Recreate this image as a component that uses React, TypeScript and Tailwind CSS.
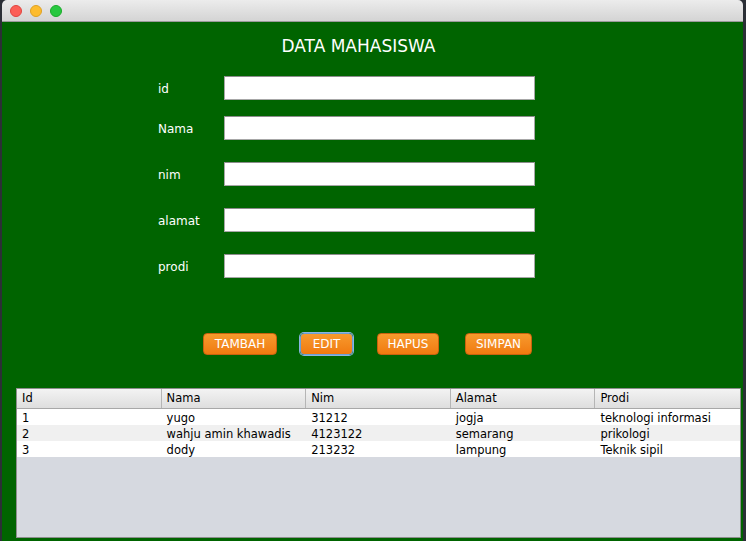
import React from 'react';

const rows = [
  { id: '1', nama: 'yugo', nim: '31212', alamat: 'jogja', prodi: 'teknologi informasi' },
  { id: '2', nama: 'wahju amin khawadis', nim: '4123122', alamat: 'semarang', prodi: 'prikologi' },
  { id: '3', nama: 'dody', nim: '213232', alamat: 'lampung', prodi: 'Teknik sipil' },
];

const fields = [
  { label: 'id', gap: 'mt-0' },
  { label: 'Nama', gap: 'mt-[16px]' },
  { label: 'nim', gap: 'mt-[22px]' },
  { label: 'alamat', gap: 'mt-[22px]' },
  { label: 'prodi', gap: 'mt-[22px]' },
];

const buttons = [
  { label: 'TAMBAH', w: 'w-[74px]', ml: 'ml-0', focus: false },
  { label: 'EDIT', w: 'w-[53px]', ml: 'ml-[23px]', focus: true },
  { label: 'HAPUS', w: 'w-[62px]', ml: 'ml-[24px]', focus: false },
  { label: 'SIMPAN', w: 'w-[67px]', ml: 'ml-[26px]', focus: false },
];

const headers = ['Id', 'Nama', 'Nim', 'Alamat', 'Prodi'];

export default function App() {
  return (
    <div
      className="w-[746px] h-[541px] bg-[#2b2f36] flex overflow-hidden"
      style={{ fontFamily: '"DejaVu Sans", "Liberation Sans", sans-serif' }}
    >
      <div className="ml-[2px] w-[741px] h-full flex flex-col rounded-t-[5px] overflow-hidden">
        {/* title bar */}
        <div className="h-[22px] shrink-0 bg-gradient-to-b from-[#ececec] to-[#d4d4d4] border-b border-[#9a9a9a] flex items-center pl-[8px] gap-[8px]">
          <span className="w-[12px] h-[12px] rounded-full bg-[#fc5f57] border border-[#e0443e]" />
          <span className="w-[12px] h-[12px] rounded-full bg-[#fdbc2e] border border-[#dea123]" />
          <span className="w-[12px] h-[12px] rounded-full bg-[#28c840] border border-[#1aab29]" />
        </div>

        <div className="flex-1 bg-[#006400] flex flex-col">
          <div className="pt-[15px] flex justify-center pr-[28px]">
            <span className="text-white text-[17px] leading-[19px]">DATA MAHASISWA</span>
          </div>

          <div className="mt-[20px] flex flex-col">
            {fields.map((f) => (
              <div key={f.label} className={`flex items-center ${f.gap}`}>
                <span className="w-[222px] pl-[156px] pt-[1px] text-white text-[12px]">{f.label}</span>
                <div className="w-[311px] h-[24px] bg-white border border-[#a7a7a7] border-t-[#8c8c8c]" />
              </div>
            ))}
          </div>

          <div className="mt-[55px] flex pl-[201px]">
            {buttons.map((b) => (
              <div
                key={b.label}
                className={`${b.w} ${b.ml} h-[22px] rounded-[4px] bg-gradient-to-b from-[#f79a2c] to-[#f07a0e] border flex items-center justify-center text-white text-[12px] ${
                  b.focus ? 'border-[#6a9fd4] ring-1 ring-[#8ab5e0]' : 'border-[#c8620f]'
                }`}
              >
                {b.label}
              </div>
            ))}
          </div>

          <div className="mt-[33px] ml-[14px] w-[725px] h-[150px] border border-[#8e8e8e] bg-[#d6d9e0] flex flex-col text-[11.5px] text-black">
            <div className="h-[20px] shrink-0 flex bg-gradient-to-b from-[#f3f3f3] to-[#dedede] border-b border-[#a8a8a8]">
              {headers.map((h, i) => (
                <div
                  key={h}
                  className={`w-[145px] flex items-center pl-[5px] pt-[1px] ${i < 4 ? 'border-r border-[#b5b5b5]' : ''}`}
                >
                  {h}
                </div>
              ))}
            </div>
            {rows.map((r, i) => (
              <div key={r.id} className={`h-[16px] flex leading-none items-center pt-[3px] ${i % 2 === 1 ? 'bg-[#f0f0f0]' : 'bg-white'}`}>
                <div className="w-[145px] pl-[5px]">{r.id}</div>
                <div className="w-[145px] pl-[5px]">{r.nama}</div>
                <div className="w-[145px] pl-[5px]">{r.nim}</div>
                <div className="w-[145px] pl-[5px]">{r.alamat}</div>
                <div className="w-[145px] pl-[5px]">{r.prodi}</div>
              </div>
            ))}
          </div>
        </div>
      </div>
    </div>
  );
}
